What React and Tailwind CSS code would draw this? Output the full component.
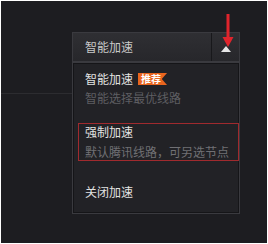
export default function App() {
  const font = { fontFamily: '"Noto Sans CJK SC", "Liberation Sans", sans-serif' };
  return (
    <div className="w-[268px] h-[244px] bg-white p-px" style={font}>
      <div className="relative h-full w-full bg-[#1d1d21] flex">
        <div className="w-[71px] shrink-0">
          <div className="mt-[92px] h-px bg-[#2c2c30]" />
        </div>
        <div className="pt-[31px] flex flex-col">
          <div className="flex h-[30px] w-[168px] border border-[#3a3a3f] bg-gradient-to-b from-[#2f2f33] to-[#27272b]">
            <div className="flex-1 flex items-center pl-[12px] text-[12px] leading-[14px] text-[#c9c9c9]">
              智能加速
            </div>
            <div className="w-[28px] border-l border-[#18181b] flex items-end justify-center pb-[9px]">
              <svg width="10" height="6" viewBox="0 0 10 6">
                <polygon points="5,0 10,6 0,6" fill="#e6e6e6" />
              </svg>
            </div>
          </div>
          <div className="w-[168px] h-[152px] border border-[#3a3a3f] bg-[#222226] pl-[5px] pr-[0px] pt-[9px] flex flex-col shadow-[inset_0_0_0_1px_#151518]">
            <div className="pl-[7px]">
              <div className="flex items-center h-[14px]">
                <span className="text-[12px] leading-[14px] text-[#e2e2e2]">智能加速</span>
                <span className="ml-[5px] flex items-center h-[12px] pl-[3px] pr-[6px] bg-[#e9651e] text-[10px] leading-[12px] font-bold text-white [clip-path:polygon(0_0,100%_0,82%_50%,100%_100%,0_100%)]">
                  推荐
                </span>
              </div>
              <div className="mt-[5px] text-[12px] leading-[14px] text-[#5e5e62]">智能选择最优线路</div>
            </div>
            <div className="mt-[18px] h-[38px] border border-[#a02a2e] pl-[6px] pt-px">
              <div className="text-[12px] leading-[14px] text-[#e2e2e2]">强制加速</div>
              <div className="mt-[6px] text-[12px] leading-[14px] text-[#707074]">默认腾讯线路，可另选节点</div>
            </div>
            <div className="mt-[24px] pl-[7px] text-[12px] leading-[14px] text-[#e2e2e2]">关闭加速</div>
          </div>
        </div>
        <svg className="absolute left-[220px] top-[13px]" width="14" height="34" viewBox="0 0 14 34">
          <rect x="5.5" y="0" width="3" height="26" fill="#e0242c" />
          <polygon points="1.5,23 12.5,23 7,33" fill="#e0242c" />
        </svg>
      </div>
    </div>
  );
}
